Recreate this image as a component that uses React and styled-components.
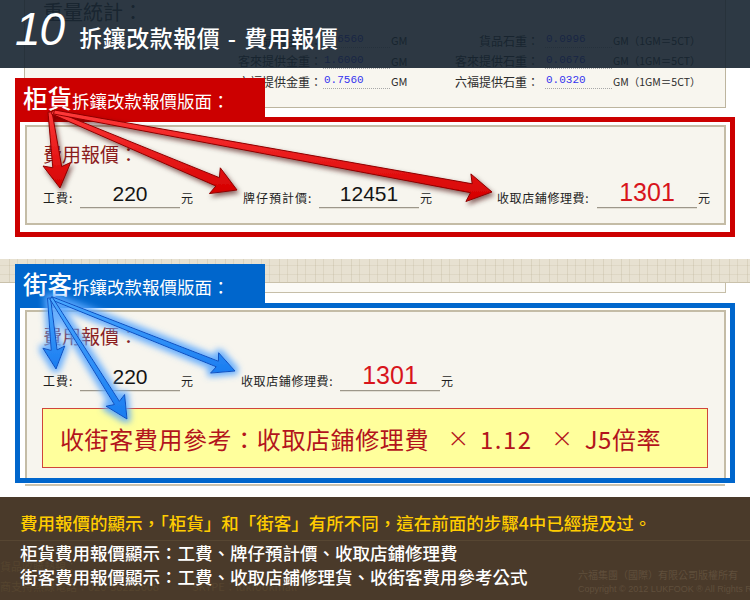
import React from 'react';
import styled, { createGlobalStyle } from 'styled-components';

const CJK = `"Noto Sans CJK TC", "Noto Sans CJK SC", "Noto Sans", sans-serif`;

const GlobalStyle = createGlobalStyle`
  html, body { margin: 0; padding: 0; background: #ffffff; }
  body { font-family: ${CJK}; }
  #root { width: 750px; height: 600px; }
`;

const Page = styled.div`
  position: relative;
  width: 750px;
  height: 600px;
  overflow: hidden;
  background: #ffffff;
  display: flex;
  flex-direction: column;
  font-family: ${CJK};
`;

/* ---------- top: weight panel + dark header ---------- */
const TopArea = styled.div`
  position: relative;
  flex: none;
  height: 108px;
`;

const WeightPanel = styled.div`
  box-sizing: border-box;
  margin-left: 24px;
  width: 702px;
  height: 108px;
  background: #f8f6ef;
  border: 1px solid #bdb59f;
  border-top: none;
  padding-left: 18px;
`;

const WeightTitle = styled.h2`
  margin: 0 0 6px;
  font-size: 20px;
  line-height: 24px;
  font-weight: 400;
  color: #333333;
`;

const WRow = styled.div`
  display: flex;
  align-items: center;
  height: 20.5px;
  font-size: 12px;
  color: #2c2c2c;
  white-space: nowrap;
`;

const WLabel = styled.span`
  flex: none;
  width: ${p => p.$w}px;
  text-align: right;
`;

const WValue = styled.span`
  flex: none;
  box-sizing: border-box;
  width: 67px;
  margin-left: ${p => p.$ml}px;
  padding-left: 1px;
  font-family: "Liberation Mono", monospace;
  font-size: 11px;
  line-height: 15px;
  color: #3333ee;
  border-bottom: 1px dotted #a8a8a8;
`;

const WUnit = styled.span`
  flex: none;
  width: ${p => (p.$w ? `${p.$w}px` : 'auto')};
  padding-left: 1px;
  font-size: ${p => (p.$small ? 10.5 : 11)}px;
`;

const Header = styled.header`
  position: absolute;
  top: 0;
  left: 0;
  width: 750px;
  height: 68px;
  box-sizing: border-box;
  padding: 6px 0 0 15px;
  display: flex;
  align-items: flex-start;
  background: rgba(22, 35, 48, 0.9);
`;

const StepNo = styled.span`
  font-family: "Liberation Sans", Arial, sans-serif;
  font-style: italic;
  font-size: 46px;
  line-height: 46px;
  color: #ffffff;
  letter-spacing: -1px;
`;

const HeaderTitle = styled.h1`
  margin: 20px 0 0 15px;
  font-size: 23px;
  line-height: 23px;
  font-weight: 500;
  letter-spacing: 0.5px;
  word-spacing: 2px;
  color: #ffffff;
  white-space: nowrap;
`;

/* ---------- framed sections ---------- */
const Section = styled.section`
  position: relative;
  z-index: 1;
  flex: none;
  margin-top: ${p => p.$mt}px;
  padding: 0 15px;
`;

const Tab = styled.div`
  box-sizing: border-box;
  width: 250px;
  height: 39px;
  padding: 0 0 3px 8px;
  display: flex;
  align-items: flex-end;
  background: ${p => p.$color};
  color: #ffffff;
`;

const TabText = styled.div`
  line-height: 26px;
  white-space: nowrap;
`;

const TabBig = styled.span`
  font-size: 24.5px;
  font-weight: 500;
`;

const TabSmall = styled.span`
  font-size: 17.5px;
`;

const Frame = styled.div`
  box-sizing: border-box;
  height: ${p => p.$h}px;
  border: 5px solid ${p => p.$color};
  background: #ffffff;
  padding: ${p => p.$pad};
`;

const FeePanel = styled.div`
  box-sizing: border-box;
  height: 100%;
  background: #f7f5ee;
  border: 2px solid #c4bca6;
  ${p => (p.$open ? 'border-bottom: none;' : '')}
  padding: ${p => p.$pt}px 0 0 16px;
`;

const FeeTitle = styled.h3`
  margin: 0;
  font-size: 19px;
  line-height: 24px;
  font-weight: 400;
  color: #8b1c1c;
`;

const FieldRow = styled.div`
  display: flex;
  align-items: flex-end;
  margin-top: ${p => p.$mt}px;
`;

const Field = styled.div`
  flex: none;
  display: flex;
  align-items: flex-end;
  width: ${p => (p.$w ? `${p.$w}px` : 'auto')};
`;

const FieldLabel = styled.span`
  flex: none;
  width: ${p => p.$w}px;
  margin-bottom: 3px;
  font-size: 12px;
  line-height: 14px;
  letter-spacing: ${p => p.$ls}px;
  color: #1e1e1e;
  white-space: nowrap;
`;

const ValueBox = styled.span`
  flex: none;
  width: 100px;
  text-align: center;
  font-family: "Liberation Sans", Arial, sans-serif;
  font-size: ${p => (p.$accent ? 25 : 21)}px;
  line-height: ${p => (p.$accent ? 22 : 26)}px;
  padding-bottom: ${p => (p.$accent ? 4 : 0)}px;
  color: ${p => (p.$accent ? '#d8141c' : '#141414')};
  border-bottom: 1px solid #9d978a;
  box-shadow: 0 1px 0 #e2ded4;
`;

const Unit = styled.span`
  flex: none;
  margin: 0 0 3px 1px;
  font-size: 12px;
  line-height: 14px;
  color: #1e1e1e;
`;

const Formula = styled.div`
  box-sizing: border-box;
  width: 666px;
  height: 60px;
  margin: 17px 0 0 -1px;
  padding-left: 17px;
  display: flex;
  align-items: center;
  background: #ffff9c;
  border: 1px solid #d0453a;
  font-size: 24px;
  letter-spacing: 0.6px;
  color: #b3141c;
  white-space: nowrap;
`;

const Op = styled.span`
  display: inline-block;
  width: 17px;
  margin: 0 ${p => p.$r}px 0 ${p => p.$l}px;
  text-align: center;
  font-family: "DejaVu Sans", sans-serif;
  font-weight: 300;
  font-size: 27px;
  line-height: 24px;
  letter-spacing: 0;
`;

const Num = styled.span`
  letter-spacing: 1.5px;
`;

const PanelFoot = styled.div`
  height: 2px;
  margin: 1px 10px 0;
  background: #cbc3ae;
`;

/* ---------- strip between sections ---------- */
const Strip = styled.div`
  flex: none;
  height: 23px;
  margin-top: 22px;
  background-color: #e7e1d1;
  background-image:
    repeating-linear-gradient(90deg, transparent 0 9px, rgba(170, 158, 126, 0.22) 9px 10px, transparent 10px 17px, rgba(170, 158, 126, 0.18) 17px 18px),
    linear-gradient(180deg, transparent 0 6px, rgba(170, 158, 126, 0.15) 6px 7px, transparent 7px 15px, rgba(170, 158, 126, 0.15) 15px 16px, transparent 16px);
  border-bottom: 1px solid #c9c1ab;
`;

const Stub = styled.div`
  flex: none;
  box-sizing: border-box;
  margin-left: 24px;
  width: 702px;
  height: 10px;
  background: #fbfaf6;
  border: 1px solid #c6bea8;
  border-top: none;
`;

/* ---------- bottom band ---------- */
const Band = styled.footer`
  position: relative;
  flex: none;
  margin-top: auto;
  height: 103px;
  box-sizing: border-box;
  padding-top: 14px;
  background: #4a3a2a;
`;

const Ghost = styled.div`
  position: absolute;
  left: 0;
  bottom: 4px;
  font-size: 11px;
  line-height: 20px;
  color: #56452f;
  white-space: nowrap;
`;

const Notice = styled.p`
  margin: 0;
  padding: 0 0 5px 20px;
  font-size: 17.5px;
  line-height: 24px;
  font-weight: 500;
  color: #ffcc00;
  border-bottom: 1px solid #574632;
  white-space: nowrap;
`;

const BandBody = styled.div`
  position: relative;
  display: flex;
`;

const Lines = styled.div`
  padding-left: 20px;
  font-size: 17.5px;
  line-height: 24px;
  font-weight: 500;
  color: #ffffff;
  white-space: nowrap;
`;

const Copyright = styled.div`
  margin-left: auto;
  width: 172px;
  padding-top: 26px;
  color: #604f3c;
  white-space: nowrap;
  overflow: hidden;
`;

const CopyLine = styled.div`
  font-size: ${p => p.$size}px;
  line-height: 15px;
  font-family: ${p => (p.$latin ? '"Liberation Sans", Arial, sans-serif' : CJK)};
`;

/* ---------- arrows (drawn over the page) ---------- */
const ArrowLayer = styled.svg`
  position: absolute;
  top: 0;
  left: 0;
  z-index: 10;
  pointer-events: none;
`;

const arrowPoints = (x1, y1, x2, y2, tail, shaft, headW, headL) => {
  const dx = x2 - x1;
  const dy = y2 - y1;
  const len = Math.hypot(dx, dy);
  const ux = dx / len;
  const uy = dy / len;
  const px = -uy;
  const py = ux;
  const bx = x2 - ux * headL;
  const by = y2 - uy * headL;
  const pt = (x, y) => `${x.toFixed(1)},${y.toFixed(1)}`;
  return [
    pt(x1 + (px * tail) / 2, y1 + (py * tail) / 2),
    pt(bx + (px * shaft) / 2, by + (py * shaft) / 2),
    pt(bx + (px * headW) / 2 - ux * 3, by + (py * headW) / 2 - uy * 3),
    pt(x2, y2),
    pt(bx - (px * headW) / 2 - ux * 3, by - (py * headW) / 2 - uy * 3),
    pt(bx - (px * shaft) / 2, by - (py * shaft) / 2),
    pt(x1 - (px * tail) / 2, y1 - (py * tail) / 2),
  ].join(' ');
};

const redArrows = [
  [50, 112, 60, 188],
  [52, 112, 237, 190],
  [54, 112, 492, 192],
];

const blueArrows = [
  [49, 298, 56, 369],
  [51, 298, 235, 371],
  [51, 298, 127, 419],
];

function Arrows() {
  return (
    <ArrowLayer width="750" height="600" viewBox="0 0 750 600">
      <defs>
        <linearGradient id="redFill" x1="0" y1="0" x2="0" y2="1">
          <stop offset="0" stopColor="#ff3a3a" />
          <stop offset="1" stopColor="#d40000" />
        </linearGradient>
        <linearGradient id="blueFill" x1="0" y1="0" x2="0" y2="1">
          <stop offset="0" stopColor="#4aa8ff" />
          <stop offset="1" stopColor="#1a7cf0" />
        </linearGradient>
        <filter id="redShadow" x="-20%" y="-40%" width="140%" height="180%">
          <feDropShadow dx="2" dy="3" stdDeviation="2.5" floodColor="#3a0000" floodOpacity="0.6" />
        </filter>
        <filter id="blueGlow" x="-30%" y="-30%" width="160%" height="160%">
          <feMorphology in="SourceAlpha" operator="dilate" radius="2.5" result="d" />
          <feGaussianBlur in="d" stdDeviation="3" result="b" />
          <feFlood floodColor="#5aa8ff" floodOpacity="0.9" />
          <feComposite in2="b" operator="in" result="g" />
          <feMerge>
            <feMergeNode in="g" />
            <feMergeNode in="SourceGraphic" />
          </feMerge>
        </filter>
      </defs>
      <g filter="url(#redShadow)">
        {redArrows.map(([x1, y1, x2, y2]) => (
          <polygon
            key={`r${x2}`}
            points={arrowPoints(x1, y1, x2, y2, 4, 9, 28, 21)}
            fill="url(#redFill)"
            stroke="#8e0000"
            strokeWidth="1"
            strokeLinejoin="round"
          />
        ))}
      </g>
      <g filter="url(#blueGlow)">
        {blueArrows.map(([x1, y1, x2, y2]) => (
          <polygon
            key={`b${x2}`}
            points={arrowPoints(x1, y1, x2, y2, 3, 6, 22, 19)}
            fill="url(#blueFill)"
            stroke="#0a4fc0"
            strokeWidth="1"
            strokeLinejoin="round"
          />
        ))}
      </g>
    </ArrowLayer>
  );
}

const weightRows = [
  ['貨品總金重：', '0.6560', '貨品石重：', '0.0996'],
  ['客來提供金重：', '1.6000', '客來提供石重：', '0.0676'],
  ['六福提供金重：', '0.7560', '六福提供石重：', '0.0320'],
];

export default function App() {
  return (
    <>
      <GlobalStyle />
      <Page>
        <TopArea>
          <WeightPanel>
            <WeightTitle>重量統計：</WeightTitle>
            {weightRows.map(([l1, v1, l2, v2]) => (
              <WRow key={l1}>
                <WLabel $w={279}>{l1}</WLabel>
                <WValue $ml={1}>{v1}</WValue>
                <WUnit $w={50}>GM</WUnit>
                <WLabel $w={98}>{l2}</WLabel>
                <WValue $ml={6}>{v2}</WValue>
                <WUnit $small>GM（1GM＝5CT）</WUnit>
              </WRow>
            ))}
          </WeightPanel>
          <Header>
            <StepNo>10</StepNo>
            <HeaderTitle>拆鑲改款報價 - 費用報價</HeaderTitle>
          </Header>
        </TopArea>

        <Section $mt={-30}>
          <Tab $color="#cc0000">
            <TabText>
              <TabBig>柜貨</TabBig>
              <TabSmall>拆鑲改款報價版面：</TabSmall>
            </TabText>
          </Tab>
          <Frame $color="#cc0000" $h={120} $pad="3px 4px 7px 5px">
            <FeePanel $pt={15}>
              <FeeTitle>費用報價：</FeeTitle>
              <FieldRow $mt={15}>
                <Field $w={200}>
                  <FieldLabel $w={37} $ls={1}>工費:</FieldLabel>
                  <ValueBox>220</ValueBox>
                  <Unit>元</Unit>
                </Field>
                <Field $w={254}>
                  <FieldLabel $w={76} $ls={1}>牌仔預計價:</FieldLabel>
                  <ValueBox>12451</ValueBox>
                  <Unit>元</Unit>
                </Field>
                <Field>
                  <FieldLabel $w={100} $ls={0.6}>收取店鋪修理費:</FieldLabel>
                  <ValueBox $accent>1301</ValueBox>
                  <Unit>元</Unit>
                </Field>
              </FieldRow>
            </FeePanel>
          </Frame>
        </Section>

        <Strip />
        <Stub />

        <Section $mt={-29}>
          <Tab $color="#0066cc">
            <TabText>
              <TabBig>街客</TabBig>
              <TabSmall>拆鑲改款報價版面：</TabSmall>
            </TabText>
          </Tab>
          <Frame $color="#0066cc" $h={180} $pad="2px 4px 0 5px">
            <FeePanel $pt={12} $open>
              <FeeTitle>費用報價：</FeeTitle>
              <FieldRow $mt={16}>
                <Field $w={198}>
                  <FieldLabel $w={37} $ls={1}>工費:</FieldLabel>
                  <ValueBox>220</ValueBox>
                  <Unit>元</Unit>
                </Field>
                <Field>
                  <FieldLabel $w={99} $ls={0.6}>收取店鋪修理費:</FieldLabel>
                  <ValueBox $accent>1301</ValueBox>
                  <Unit>元</Unit>
                </Field>
              </FieldRow>
              <Formula>
                收街客費用參考：收取店鋪修理費
                <Op $l={18} $r={16}>×</Op>
                <Num>1.12</Num>
                <Op $l={18} $r={17}>×</Op>
                J5倍率
              </Formula>
            </FeePanel>
          </Frame>
          <PanelFoot />
        </Section>

        <Band>
          <Ghost>
            <div>貨品收購熱線：</div>
            <div>商支持熱線電話：020-38223608　　　SKYPE：lukfookmall</div>
          </Ghost>
          <Notice>費用報價的顯示，「柜貨」和「街客」有所不同，這在前面的步驟4中已經提及过。</Notice>
          <BandBody>
            <Lines>
              <div>柜貨費用報價顯示：工費、牌仔預計價、收取店鋪修理費</div>
              <div>街客費用報價顯示：工費、收取店鋪修理貨、收街客費用參考公式</div>
            </Lines>
            <Copyright>
              <CopyLine $size={10}>六福集團（國際）有限公司版權所有</CopyLine>
              <CopyLine $size={9} $latin>Copyright © 2012 LUKFOOK ® All Rights Reserved</CopyLine>
            </Copyright>
          </BandBody>
        </Band>

        <Arrows />
      </Page>
    </>
  );
}
